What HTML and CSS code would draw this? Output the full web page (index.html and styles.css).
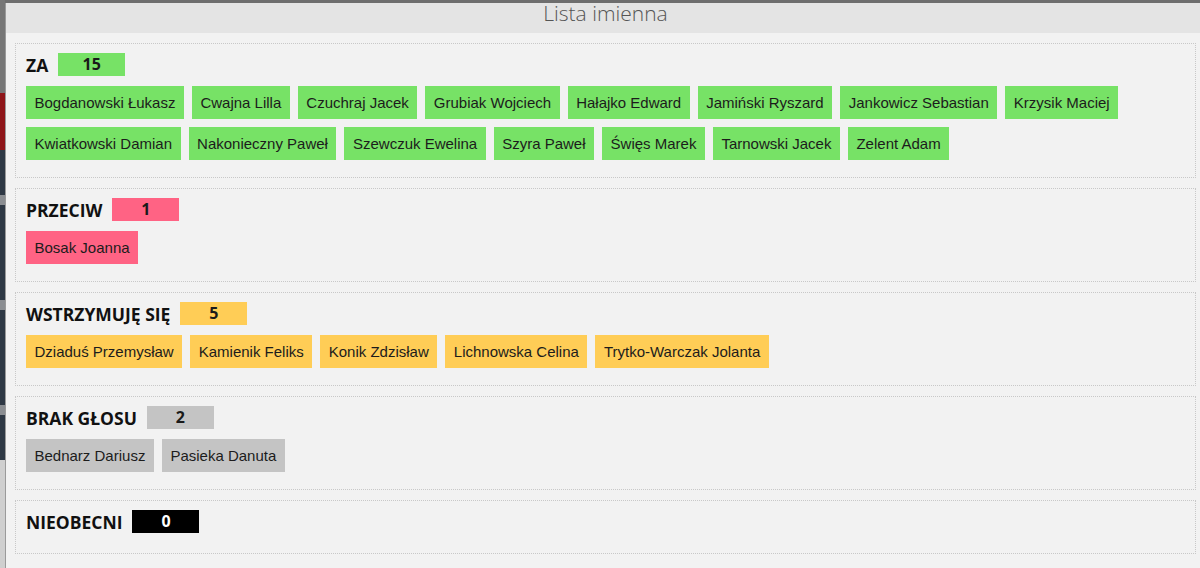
FILE: index.html
```html
<!DOCTYPE html>
<html lang="pl">
  <head>
    <meta charset="UTF-8" />
    <title>Lista imienna</title>
    <link rel="stylesheet" href="styles.css">
  </head>
  <body>
    <!-- Page behind the modal (left edge only visible) -->
    <div class="backdrop">
      <div class="bd-top"></div>
      <div class="bd-red"></div>
      <div class="bd-dark"></div>
      <div class="bd-line"></div>
      <div class="bd-dark tall"></div>
      <div class="bd-line"></div>
      <div class="bd-dark tall"></div>
      <div class="bd-line"></div>
      <div class="bd-dark"></div>
      <div class="bd-light"></div>
    </div>

    <!-- Modal -->
    <div class="modal">
      <div class="modal-header">Lista imienna</div>

      <div class="modal-body">
        <!-- Za -->
        <div class="vote-group">
          <div class="group-head">
            <span class="group-name">ZA</span>
            <span class="count za">15</span>
          </div>
          <div class="names">
            <span class="name za">Bogdanowski Łukasz</span>
            <span class="name za">Cwajna Lilla</span>
            <span class="name za">Czuchraj Jacek</span>
            <span class="name za">Grubiak Wojciech</span>
            <span class="name za">Hałajko Edward</span>
            <span class="name za">Jamiński Ryszard</span>
            <span class="name za">Jankowicz Sebastian</span>
            <span class="name za">Krzysik Maciej</span>
            <span class="name za">Kwiatkowski Damian</span>
            <span class="name za">Nakonieczny Paweł</span>
            <span class="name za">Szewczuk Ewelina</span>
            <span class="name za">Szyra Paweł</span>
            <span class="name za">Święs Marek</span>
            <span class="name za">Tarnowski Jacek</span>
            <span class="name za">Zelent Adam</span>
          </div>
        </div>

        <!-- Przeciw -->
        <div class="vote-group">
          <div class="group-head">
            <span class="group-name">PRZECIW</span>
            <span class="count przeciw">1</span>
          </div>
          <div class="names">
            <span class="name przeciw">Bosak Joanna</span>
          </div>
        </div>

        <!-- Wstrzymuje sie -->
        <div class="vote-group">
          <div class="group-head">
            <span class="group-name">WSTRZYMUJĘ SIĘ</span>
            <span class="count wstrz">5</span>
          </div>
          <div class="names">
            <span class="name wstrz">Dziaduś Przemysław</span>
            <span class="name wstrz">Kamienik Feliks</span>
            <span class="name wstrz">Konik Zdzisław</span>
            <span class="name wstrz">Lichnowska Celina</span>
            <span class="name wstrz">Trytko-Warczak Jolanta</span>
          </div>
        </div>

        <!-- Brak glosu -->
        <div class="vote-group">
          <div class="group-head">
            <span class="group-name">BRAK GŁOSU</span>
            <span class="count brak">2</span>
          </div>
          <div class="names">
            <span class="name brak">Bednarz Dariusz</span>
            <span class="name brak">Pasieka Danuta</span>
          </div>
        </div>

        <!-- Nieobecni -->
        <div class="vote-group empty">
          <div class="group-head">
            <span class="group-name">NIEOBECNI</span>
            <span class="count nieob">0</span>
          </div>
        </div>
      </div>
    </div>
  </body>
</html>
```

FILE: styles.css
```css
/* Whole page */
body {
  margin: 0;
  height: 568px;
  overflow: hidden;
  display: flex;
  background-color: #6e6e6e;
  font-family: "Liberation Sans", Arial, sans-serif;
}

/* Page behind the modal */
.backdrop {
  width: 5px;
  flex: none;
  display: flex;
  flex-direction: column;
}
.bd-top {
  height: 93px;
  background-color: #767676;
}
.bd-red {
  height: 57px;
  background-color: #8e1519;
}
.bd-dark {
  height: 45px;
  background-color: #2e3844;
}
.bd-dark.tall {
  height: 95px;
}
.bd-line {
  height: 10px;
  background-color: #8a8d91;
}
.bd-light {
  flex: 1;
  background-color: #cfcfcf;
}

/* Modal window */
.modal {
  width: 1199px;
  flex: none;
  margin-top: 3px;
  border-left: 1px solid #9a9a9a;
  background-color: #f2f2f2;
}

/* Modal title */
.modal-header {
  height: 30px;
  line-height: 21px;
  background-color: #e4e4e4;
  text-align: center;
  font-family: "Open Sans", sans-serif;
  font-weight: 300;
  font-size: 21px;
  color: #555;
}

/* Modal content */
.modal-body {
  padding: 10px 9px 0 9px;
  display: flex;
  flex-direction: column;
  gap: 10px;
}

/* One group of votes */
.vote-group {
  border: 1px dotted #c8c8c8;
  padding: 9px 10px 9px 10px;
}
.vote-group.empty {
  padding-bottom: 10px;
}
.group-head {
  display: flex;
  align-items: center;
  height: 23px;
  margin-bottom: 10px;
}
.group-name {
  font-family: "Open Sans", sans-serif;
  font-weight: bold;
  font-size: 17.5px;
  color: #111;
  margin-right: 10px;
}
.count {
  width: 67px;
  height: 23px;
  line-height: 23px;
  text-align: center;
  font-family: "Open Sans", sans-serif;
  font-weight: bold;
  font-size: 16px;
  color: #1a1a1a;
}

/* Names list */
.names {
  display: flex;
  flex-wrap: wrap;
  gap: 8px;
  margin-bottom: 8px;
}
.name {
  height: 33px;
  line-height: 33px;
  padding: 0 8.5px;
  font-size: 15px;
  color: #1c1c1c;
}

/* Colours */
.za {
  background-color: #77e266;
}
.przeciw {
  background-color: #ff6384;
}
.wstrz {
  background-color: #ffcd56;
}
.brak {
  background-color: #c4c4c4;
}
.nieob {
  background-color: #000;
  color: #fff;
}
```
